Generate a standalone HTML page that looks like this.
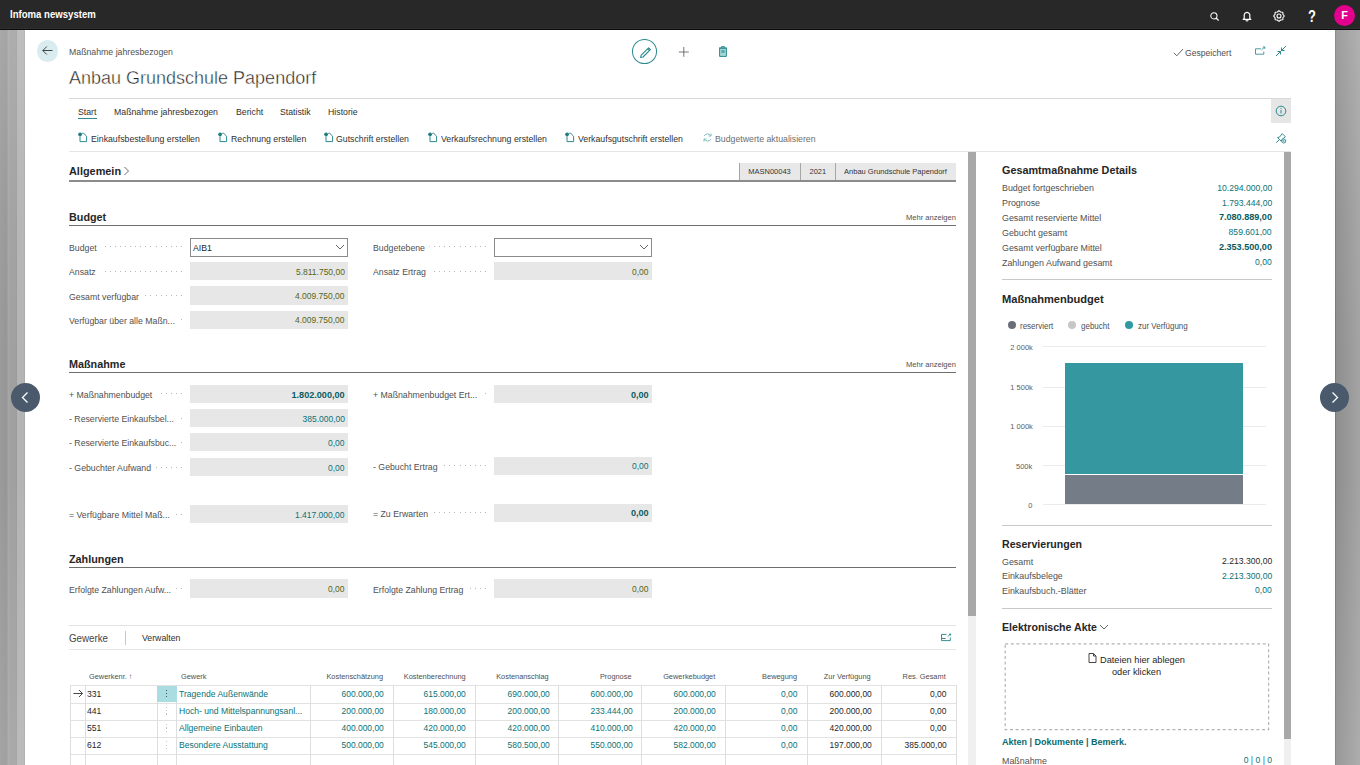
<!DOCTYPE html><html><head><meta charset="utf-8"><style>html,body{margin:0;padding:0;width:1360px;height:765px;overflow:hidden;background:#fff;font-family:"Liberation Sans",sans-serif}body>div,body>svg{position:absolute;box-sizing:border-box}</style></head><body>
<div style="left:0;top:30px;width:25px;height:735px;background:linear-gradient(180deg,rgba(255,255,255,0.14) 0,rgba(255,255,255,0.04) 25%,rgba(255,255,255,0) 45%,rgba(255,255,255,0) 60%,rgba(255,255,255,0.1) 100%),linear-gradient(90deg,#9a9a9a 0,#969696 7px,#a6a6a6 8px,#a6a6a6 9px,#a0a0a0 10px,#a0a0a0 16px,#999 17px,#b4b4b4 17.5px,#b4b4b4 24px,#a0a0a0 25px)"></div>
<div style="left:1335px;top:30px;width:25px;height:735px;background:linear-gradient(180deg,rgba(255,255,255,0.14) 0,rgba(255,255,255,0.04) 25%,rgba(255,255,255,0) 45%,rgba(255,255,255,0) 60%,rgba(255,255,255,0.1) 100%),linear-gradient(90deg,#7a7a7a 0,#7a7a7a 1px,#8e8e8e 1.5px,#a4a4a4 25px)"></div>
<div style="left:0px;top:0px;width:1360px;height:29px;background:#282828"></div>
<div style="left:0px;top:28px;width:1360px;height:1px;background:#303030"></div>
<div style="left:0px;top:29px;width:1360px;height:1px;background:#0a0a0a"></div>
<div style="left:10px;top:9.04px;font-size:10.94px;line-height:10.94px;color:#ffffff;font-weight:bold;white-space:nowrap;transform:scaleX(0.8772);transform-origin:left;">Infoma newsystem</div>
<svg style="left:1209px;top:11px;" width="12" height="11" viewBox="0 0 12 11"><circle cx="4.9" cy="4.8" r="3.1" fill="none" stroke="#fff" stroke-width="1.05"/><line x1="7.1" y1="7.0" x2="9.6" y2="9.5" stroke="#fff" stroke-width="1.1"/></svg>
<svg style="left:1241px;top:10px;" width="12" height="12" viewBox="0 0 12 12"><path d="M3.2 8.4 V4.6 A2.9 2.9 0 0 1 8.8 4.6 V8.4 L9.8 9.4 H2.2 Z" fill="none" stroke="#fff" stroke-width="1.2" stroke-linejoin="round"/><path d="M4.8 10.2 A1.3 1.3 0 0 0 7.2 10.2" fill="none" stroke="#fff" stroke-width="1.1"/></svg>
<svg style="left:1273px;top:10px;" width="12" height="12" viewBox="0 0 12 12"><polygon points="11.40,6.00 9.97,7.65 9.82,9.82 7.65,9.97 6.00,11.40 4.35,9.97 2.18,9.82 2.03,7.65 0.60,6.00 2.03,4.35 2.18,2.18 4.35,2.03 6.00,0.60 7.65,2.03 9.82,2.18 9.97,4.35" fill="none" stroke="#fff" stroke-width="1.1" stroke-linejoin="round"/><circle cx="6" cy="6" r="2" fill="none" stroke="#fff" stroke-width="1.1"/></svg>
<div style="left:1308px;top:8.33px;font-size:16.50px;line-height:16.50px;color:#fff;font-weight:bold;white-space:nowrap;transform:scaleX(0.78);transform-origin:left">?</div>
<div style="left:1334px;top:5px;width:21px;height:21px;background:#e3008c;border-radius:50%"></div>
<div style="left:1341.2px;top:10.16px;font-size:10.80px;line-height:10.80px;color:#fff;font-weight:bold;white-space:nowrap;">F</div>
<div style="left:25px;top:30px;width:1310px;height:735px;background:#fff"></div>
<div style="left:36.5px;top:40px;width:21.5px;height:21.5px;background:#d9ecef;border-radius:50%"></div>
<svg style="left:41px;top:44px;" width="13" height="13" viewBox="0 0 13 13"><path d="M11.5 6.5 H1.8 M5.8 2.5 L1.8 6.5 L5.8 10.5" fill="none" stroke="#333" stroke-width="0.9"/></svg>
<div style="left:69px;top:48.35px;font-size:9.28px;line-height:9.28px;color:#505050;font-weight:normal;white-space:nowrap;transform:scaleX(0.9434);transform-origin:left;">Maßnahme jahresbezogen</div>
<div style="left:69px;top:67.75px;font-size:19.08px;line-height:19.08px;color:#1e1e1e;font-weight:normal;white-space:nowrap;transform:scaleX(0.9434);transform-origin:left;-webkit-text-stroke:0.45px #fff">Anbau Grundschule Papendorf</div>
<div style="left:632px;top:39.4px;width:25px;height:24.6px;border:1.2px solid #2a8a8e;border-radius:50%"></div>
<svg style="left:638px;top:45px;" width="15" height="15" viewBox="0 0 15 15"><path d="M2.6 12.4 L3.2 10.2 L10.6 2.8 L12.4 4.6 L5 12 Z M9.6 3.8 L11.4 5.6" fill="none" stroke="#2a8a8e" stroke-width="1.1" stroke-linejoin="round"/></svg>
<svg style="left:678px;top:46px;" width="12" height="12" viewBox="0 0 12 12"><path d="M5.8 1 V10.8 M0.8 6 H10.8" stroke="#666" stroke-width="0.9"/></svg>
<svg style="left:717px;top:45px;" width="12" height="13" viewBox="0 0 12 13"><path d="M2.6 3.2 H9.4 V11.4 H2.6 Z" fill="#a6d6d6" stroke="#2a8a8e" stroke-width="1"/><path d="M2 3 H10 M4.6 3 V1.6 H7.4 V3" fill="none" stroke="#2a8a8e" stroke-width="1"/><rect x="4.4" y="5" width="3.2" height="3" fill="#2a8a8e" opacity="0.6"/></svg>
<svg style="left:1173px;top:48px;" width="11" height="9" viewBox="0 0 11 9"><path d="M0.8 4.8 L3.8 7.8 L10 1" fill="none" stroke="#555" stroke-width="0.9"/></svg>
<div style="left:1184.5px;top:48.58px;font-size:9.12px;line-height:9.12px;color:#505050;font-weight:normal;white-space:nowrap;transform:scaleX(0.9434);transform-origin:left;">Gespeichert</div>
<svg style="left:1254px;top:46px;" width="12" height="10" viewBox="0 0 12 10"><path d="M7 2.8 H1.5 V8.2 H9.8 V5.5" fill="none" stroke="#2a8a8e" stroke-width="0.85"/><path d="M7.5 4 L10.5 1.2 M8.8 1 H10.8 V3" fill="none" stroke="#2a8a8e" stroke-width="0.85"/></svg>
<svg style="left:1275px;top:45px;" width="12" height="12" viewBox="0 0 12 12"><path d="M11 1 L6.5 5.5 M6.5 2.5 V5.5 H9.5 M1 11 L5.5 6.5 M2.5 6.5 H5.5 V9.5" fill="none" stroke="#2a8a8e" stroke-width="1"/></svg>
<div style="left:69px;top:98px;width:1222px;height:1px;background:#d9d9d9"></div>
<div style="left:1271px;top:98.5px;width:20px;height:24.5px;background:#e6e6e6"></div>
<svg style="left:1275px;top:105px;" width="12" height="12" viewBox="0 0 12 12"><circle cx="6" cy="6" r="4.8" fill="none" stroke="#2a8a8e" stroke-width="1"/><path d="M6 5 V8.5" stroke="#2a8a8e" stroke-width="1"/><circle cx="6" cy="3.5" r="0.6" fill="#2a8a8e"/></svg>
<div style="left:78px;top:108.15px;font-size:9.28px;line-height:9.28px;color:#303030;font-weight:normal;white-space:nowrap;transform:scaleX(0.9434);transform-origin:left;">Start</div>
<div style="left:113.6px;top:108.15px;font-size:9.28px;line-height:9.28px;color:#303030;font-weight:normal;white-space:nowrap;transform:scaleX(0.9434);transform-origin:left;">Maßnahme jahresbezogen</div>
<div style="left:235.5px;top:108.15px;font-size:9.28px;line-height:9.28px;color:#303030;font-weight:normal;white-space:nowrap;transform:scaleX(0.9434);transform-origin:left;">Bericht</div>
<div style="left:280px;top:108.15px;font-size:9.28px;line-height:9.28px;color:#303030;font-weight:normal;white-space:nowrap;transform:scaleX(0.9434);transform-origin:left;">Statistik</div>
<div style="left:327.8px;top:108.15px;font-size:9.28px;line-height:9.28px;color:#303030;font-weight:normal;white-space:nowrap;transform:scaleX(0.9434);transform-origin:left;">Historie</div>
<div style="left:78px;top:117.5px;width:18.5px;height:1.3px;background:#2a8a8e"></div>
<svg style="left:78px;top:131px;" width="11" height="12" viewBox="0 0 11 12"><path d="M4.2 2.3 H5.7 L8.6 5.2 V10.6 H2 V5.2" fill="none" stroke="#2a8a8e" stroke-width="1"/><circle cx="2.1" cy="3.3" r="1.9" fill="#1f7a7e"/></svg>
<div style="left:90.5px;top:134.65px;font-size:9.28px;line-height:9.28px;color:#303030;font-weight:normal;white-space:nowrap;transform:scaleX(0.9434);transform-origin:left;">Einkaufsbestellung erstellen</div>
<svg style="left:218px;top:131px;" width="11" height="12" viewBox="0 0 11 12"><path d="M4.2 2.3 H5.7 L8.6 5.2 V10.6 H2 V5.2" fill="none" stroke="#2a8a8e" stroke-width="1"/><circle cx="2.1" cy="3.3" r="1.9" fill="#1f7a7e"/></svg>
<div style="left:230.5px;top:134.65px;font-size:9.28px;line-height:9.28px;color:#303030;font-weight:normal;white-space:nowrap;transform:scaleX(0.9434);transform-origin:left;">Rechnung erstellen</div>
<svg style="left:323.5px;top:131px;" width="11" height="12" viewBox="0 0 11 12"><path d="M4.2 2.3 H5.7 L8.6 5.2 V10.6 H2 V5.2" fill="none" stroke="#2a8a8e" stroke-width="1"/><circle cx="2.1" cy="3.3" r="1.9" fill="#1f7a7e"/></svg>
<div style="left:336.0px;top:134.65px;font-size:9.28px;line-height:9.28px;color:#303030;font-weight:normal;white-space:nowrap;transform:scaleX(0.9434);transform-origin:left;">Gutschrift erstellen</div>
<svg style="left:428px;top:131px;" width="11" height="12" viewBox="0 0 11 12"><path d="M4.2 2.3 H5.7 L8.6 5.2 V10.6 H2 V5.2" fill="none" stroke="#2a8a8e" stroke-width="1"/><circle cx="2.1" cy="3.3" r="1.9" fill="#1f7a7e"/></svg>
<div style="left:440.5px;top:134.65px;font-size:9.28px;line-height:9.28px;color:#303030;font-weight:normal;white-space:nowrap;transform:scaleX(0.9434);transform-origin:left;">Verkaufsrechnung erstellen</div>
<svg style="left:565px;top:131px;" width="11" height="12" viewBox="0 0 11 12"><path d="M4.2 2.3 H5.7 L8.6 5.2 V10.6 H2 V5.2" fill="none" stroke="#2a8a8e" stroke-width="1"/><circle cx="2.1" cy="3.3" r="1.9" fill="#1f7a7e"/></svg>
<div style="left:577.5px;top:134.65px;font-size:9.28px;line-height:9.28px;color:#303030;font-weight:normal;white-space:nowrap;transform:scaleX(0.9434);transform-origin:left;">Verkaufsgutschrift erstellen</div>
<svg style="left:702px;top:132px;" width="11" height="11" viewBox="0 0 11 11"><path d="M9 4 A4 4 0 0 0 2 4 M2 7 A4 4 0 0 0 9 7" fill="none" stroke="#7fbcbc" stroke-width="1"/><path d="M9 1.5 V4 H6.5 M2 9.5 V7 H4.5" fill="none" stroke="#7fbcbc" stroke-width="1"/></svg>
<div style="left:714.5px;top:134.65px;font-size:9.28px;line-height:9.28px;color:#6e6e6e;font-weight:normal;white-space:nowrap;transform:scaleX(0.9434);transform-origin:left;">Budgetwerte aktualisieren</div>
<svg style="left:1275px;top:132px;" width="12" height="12" viewBox="0 0 12 12"><path d="M1.2 10.8 L4.6 7.4 M2.6 5.6 L4.4 5.2 L7.2 1.6 L10.4 4.8 L6.8 7.6 L6.4 9.4 Z" fill="none" stroke="#2a8a8e" stroke-width="0.95" stroke-linejoin="round"/><circle cx="8.8" cy="9" r="2" fill="#fff" stroke="#2a8a8e" stroke-width="0.9"/><circle cx="8.8" cy="9" r="0.8" fill="#2a8a8e"/></svg>
<div style="left:69px;top:151px;width:1222px;height:1px;background:#e6e6e6"></div>
<div style="left:968px;top:152px;width:8px;height:464px;background:#a8a8a8"></div>
<div style="left:968px;top:616px;width:8px;height:149px;background:#f0f0f0"></div>
<div style="left:1283.5px;top:152px;width:7.5px;height:587px;background:#a8a8a8"></div>
<div style="left:1283.5px;top:739px;width:7.5px;height:26px;background:#f0f0f0"></div>
<div style="left:69px;top:166.47px;font-size:10.90px;line-height:10.90px;color:#262626;font-weight:bold;white-space:nowrap;">Allgemein</div>
<svg style="left:123px;top:166px;" width="7" height="10" viewBox="0 0 7 10"><path d="M1.5 1 L5.5 5 L1.5 9" fill="none" stroke="#555" stroke-width="0.9"/></svg>
<div style="left:69px;top:180px;width:887px;height:2px;background:#8c8c8c"></div>
<div style="left:739px;top:163px;width:61px;height:17px;background:#e8e8e9;border-left:1px solid #a6a6a6;font-size:7.5px;line-height:17px;text-align:center;color:#333;white-space:nowrap"><span style="display:inline-block;font-size:7.95px;transform:scaleX(0.943)">MASN00043</span></div>
<div style="left:800px;top:163px;width:34.5px;height:17px;background:#e8e8e9;border-left:1px solid #a6a6a6;font-size:7.5px;line-height:17px;text-align:center;color:#333;white-space:nowrap"><span style="display:inline-block;font-size:7.95px;transform:scaleX(0.943)">2021</span></div>
<div style="left:834.5px;top:163px;width:121.5px;height:17px;background:#e8e8e9;border-left:1px solid #a6a6a6;font-size:7.5px;line-height:17px;text-align:center;color:#333;white-space:nowrap"><span style="display:inline-block;font-size:7.95px;transform:scaleX(0.943)">Anbau Grundschule Papendorf</span></div>
<div style="left:69px;top:211.96px;font-size:10.80px;line-height:10.80px;color:#262626;font-weight:bold;white-space:nowrap;">Budget</div>
<div style="right:404px;top:214.33px;font-size:8.00px;line-height:8.00px;color:#505050;font-weight:normal;white-space:nowrap;transform:scaleX(0.9434);transform-origin:right;">Mehr anzeigen</div>
<div style="left:69px;top:224.6px;width:887px;height:1.3px;background:#6e6e6e"></div>
<div style="left:69px;top:246.00px;width:113px;height:1px;background:repeating-linear-gradient(270deg,#b8b8b8 0 1px,transparent 1px 5.1px)"></div>
<div style="left:69px;top:242.85px;font-size:9.62px;line-height:9.62px;color:#505050;white-space:nowrap;background:#fff;padding-right:5px;transform:scaleX(0.9091);transform-origin:left">Budget</div>
<div style="left:190px;top:238.2px;width:158px;height:18.5px;border:1px solid #8a8a8a;background:#fff"></div>
<div style="left:193px;top:243.65px;font-size:9.28px;line-height:9.28px;color:#262626;font-weight:normal;white-space:nowrap;transform:scaleX(0.9434);transform-origin:left;">AIB1</div>
<svg style="left:335px;top:244.2px;" width="10" height="7" viewBox="0 0 10 7"><path d="M1 1 L5 5 L9 1" fill="none" stroke="#555" stroke-width="0.9"/></svg>
<div style="left:373px;top:246.00px;width:113px;height:1px;background:repeating-linear-gradient(270deg,#b8b8b8 0 1px,transparent 1px 5.1px)"></div>
<div style="left:373px;top:242.85px;font-size:9.62px;line-height:9.62px;color:#505050;white-space:nowrap;background:#fff;padding-right:5px;transform:scaleX(0.9091);transform-origin:left">Budgetebene</div>
<div style="left:494px;top:238.2px;width:158px;height:18.5px;border:1px solid #8a8a8a;background:#fff"></div>
<svg style="left:639px;top:244.2px;" width="10" height="7" viewBox="0 0 10 7"><path d="M1 1 L5 5 L9 1" fill="none" stroke="#555" stroke-width="0.9"/></svg>
<div style="left:69px;top:270.60px;width:113px;height:1px;background:repeating-linear-gradient(270deg,#b8b8b8 0 1px,transparent 1px 5.1px)"></div>
<div style="left:69px;top:267.45px;font-size:9.62px;line-height:9.62px;color:#505050;white-space:nowrap;background:#fff;padding-right:5px;transform:scaleX(0.9091);transform-origin:left">Ansatz</div>
<div style="left:190px;top:262px;width:158px;height:18.3px;background:#e7e7e8"></div>
<div style="right:1015.4px;top:267.87px;font-size:9.01px;line-height:9.01px;color:#566514;font-weight:normal;white-space:nowrap;transform:scaleX(0.9434);transform-origin:right;">5.811.750,00</div>
<div style="left:373px;top:270.60px;width:113px;height:1px;background:repeating-linear-gradient(270deg,#b8b8b8 0 1px,transparent 1px 5.1px)"></div>
<div style="left:373px;top:267.45px;font-size:9.62px;line-height:9.62px;color:#505050;white-space:nowrap;background:#fff;padding-right:5px;transform:scaleX(0.9091);transform-origin:left">Ansatz Ertrag</div>
<div style="left:494px;top:262px;width:158px;height:18.3px;background:#e7e7e8"></div>
<div style="right:711.4px;top:267.87px;font-size:9.01px;line-height:9.01px;color:#566514;font-weight:normal;white-space:nowrap;transform:scaleX(0.9434);transform-origin:right;">0,00</div>
<div style="left:69px;top:294.90px;width:113px;height:1px;background:repeating-linear-gradient(270deg,#b8b8b8 0 1px,transparent 1px 5.1px)"></div>
<div style="left:69px;top:291.75px;font-size:9.62px;line-height:9.62px;color:#505050;white-space:nowrap;background:#fff;padding-right:5px;transform:scaleX(0.9091);transform-origin:left">Gesamt verfügbar</div>
<div style="left:190px;top:286.3px;width:158px;height:18.3px;background:#e7e7e8"></div>
<div style="right:1015.4px;top:292.17px;font-size:9.01px;line-height:9.01px;color:#566514;font-weight:normal;white-space:nowrap;transform:scaleX(0.9434);transform-origin:right;">4.009.750,00</div>
<div style="left:69px;top:319.10px;width:113px;height:1px;background:repeating-linear-gradient(270deg,#b8b8b8 0 1px,transparent 1px 5.1px)"></div>
<div style="left:69px;top:315.95px;font-size:9.62px;line-height:9.62px;color:#505050;white-space:nowrap;background:#fff;padding-right:5px;transform:scaleX(0.9091);transform-origin:left">Verfügbar über alle Maßn...</div>
<div style="left:190px;top:310.5px;width:158px;height:18.3px;background:#e7e7e8"></div>
<div style="right:1015.4px;top:316.37px;font-size:9.01px;line-height:9.01px;color:#566514;font-weight:normal;white-space:nowrap;transform:scaleX(0.9434);transform-origin:right;">4.009.750,00</div>
<div style="left:69px;top:358.56px;font-size:10.80px;line-height:10.80px;color:#262626;font-weight:bold;white-space:nowrap;">Maßnahme</div>
<div style="right:404px;top:360.93px;font-size:8.00px;line-height:8.00px;color:#505050;font-weight:normal;white-space:nowrap;transform:scaleX(0.9434);transform-origin:right;">Mehr anzeigen</div>
<div style="left:69px;top:372px;width:887px;height:1.3px;background:#6e6e6e"></div>
<div style="left:69px;top:393.30px;width:113px;height:1px;background:repeating-linear-gradient(270deg,#b8b8b8 0 1px,transparent 1px 5.1px)"></div>
<div style="left:69px;top:390.15px;font-size:9.62px;line-height:9.62px;color:#505050;white-space:nowrap;background:#fff;padding-right:5px;transform:scaleX(0.9091);transform-origin:left">+ Maßnahmenbudget</div>
<div style="left:190px;top:384.7px;width:158px;height:18.3px;background:#e7e7e8"></div>
<div style="right:1015.4px;top:390.50px;font-size:9.10px;line-height:9.10px;color:#095c60;font-weight:bold;white-space:nowrap;">1.802.000,00</div>
<div style="left:373px;top:393.30px;width:113px;height:1px;background:repeating-linear-gradient(270deg,#b8b8b8 0 1px,transparent 1px 5.1px)"></div>
<div style="left:373px;top:390.15px;font-size:9.62px;line-height:9.62px;color:#505050;white-space:nowrap;background:#fff;padding-right:5px;transform:scaleX(0.9091);transform-origin:left">+ Maßnahmenbudget Ert...</div>
<div style="left:494px;top:384.7px;width:158px;height:18.3px;background:#e7e7e8"></div>
<div style="right:711.4px;top:390.50px;font-size:9.10px;line-height:9.10px;color:#095c60;font-weight:bold;white-space:nowrap;">0,00</div>
<div style="left:69px;top:417.60px;width:113px;height:1px;background:repeating-linear-gradient(270deg,#b8b8b8 0 1px,transparent 1px 5.1px)"></div>
<div style="left:69px;top:414.45px;font-size:9.62px;line-height:9.62px;color:#505050;white-space:nowrap;background:#fff;padding-right:5px;transform:scaleX(0.9091);transform-origin:left">- Reservierte Einkaufsbel...</div>
<div style="left:190px;top:409px;width:158px;height:18.3px;background:#e7e7e8"></div>
<div style="right:1015.4px;top:414.87px;font-size:9.01px;line-height:9.01px;color:#0a7275;font-weight:normal;white-space:nowrap;transform:scaleX(0.9434);transform-origin:right;">385.000,00</div>
<div style="left:69px;top:441.60px;width:113px;height:1px;background:repeating-linear-gradient(270deg,#b8b8b8 0 1px,transparent 1px 5.1px)"></div>
<div style="left:69px;top:438.45px;font-size:9.62px;line-height:9.62px;color:#505050;white-space:nowrap;background:#fff;padding-right:5px;transform:scaleX(0.9091);transform-origin:left">- Reservierte Einkaufsbuc...</div>
<div style="left:190px;top:433px;width:158px;height:18.3px;background:#e7e7e8"></div>
<div style="right:1015.4px;top:438.87px;font-size:9.01px;line-height:9.01px;color:#0a7275;font-weight:normal;white-space:nowrap;transform:scaleX(0.9434);transform-origin:right;">0,00</div>
<div style="left:69px;top:466.50px;width:113px;height:1px;background:repeating-linear-gradient(270deg,#b8b8b8 0 1px,transparent 1px 5.1px)"></div>
<div style="left:69px;top:463.35px;font-size:9.62px;line-height:9.62px;color:#505050;white-space:nowrap;background:#fff;padding-right:5px;transform:scaleX(0.9091);transform-origin:left">- Gebuchter Aufwand</div>
<div style="left:190px;top:457.9px;width:158px;height:18.3px;background:#e7e7e8"></div>
<div style="right:1015.4px;top:463.77px;font-size:9.01px;line-height:9.01px;color:#0a7275;font-weight:normal;white-space:nowrap;transform:scaleX(0.9434);transform-origin:right;">0,00</div>
<div style="left:373px;top:465.10px;width:113px;height:1px;background:repeating-linear-gradient(270deg,#b8b8b8 0 1px,transparent 1px 5.1px)"></div>
<div style="left:373px;top:461.95px;font-size:9.62px;line-height:9.62px;color:#505050;white-space:nowrap;background:#fff;padding-right:5px;transform:scaleX(0.9091);transform-origin:left">- Gebucht Ertrag</div>
<div style="left:494px;top:456.5px;width:158px;height:18.3px;background:#e7e7e8"></div>
<div style="right:711.4px;top:462.37px;font-size:9.01px;line-height:9.01px;color:#0a7275;font-weight:normal;white-space:nowrap;transform:scaleX(0.9434);transform-origin:right;">0,00</div>
<div style="left:69px;top:513.60px;width:113px;height:1px;background:repeating-linear-gradient(270deg,#b8b8b8 0 1px,transparent 1px 5.1px)"></div>
<div style="left:69px;top:510.45px;font-size:9.62px;line-height:9.62px;color:#505050;white-space:nowrap;background:#fff;padding-right:5px;transform:scaleX(0.9091);transform-origin:left">= Verfügbare Mittel Maß...</div>
<div style="left:190px;top:505px;width:158px;height:18.3px;background:#e7e7e8"></div>
<div style="right:1015.4px;top:510.87px;font-size:9.01px;line-height:9.01px;color:#0a7275;font-weight:normal;white-space:nowrap;transform:scaleX(0.9434);transform-origin:right;">1.417.000,00</div>
<div style="left:373px;top:512.10px;width:113px;height:1px;background:repeating-linear-gradient(270deg,#b8b8b8 0 1px,transparent 1px 5.1px)"></div>
<div style="left:373px;top:508.95px;font-size:9.62px;line-height:9.62px;color:#505050;white-space:nowrap;background:#fff;padding-right:5px;transform:scaleX(0.9091);transform-origin:left">= Zu Erwarten</div>
<div style="left:494px;top:503.5px;width:158px;height:18.3px;background:#e7e7e8"></div>
<div style="right:711.4px;top:509.30px;font-size:9.10px;line-height:9.10px;color:#095c60;font-weight:bold;white-space:nowrap;">0,00</div>
<div style="left:69px;top:553.56px;font-size:10.80px;line-height:10.80px;color:#262626;font-weight:bold;white-space:nowrap;">Zahlungen</div>
<div style="left:69px;top:567px;width:887px;height:1.3px;background:#6e6e6e"></div>
<div style="left:69px;top:587.90px;width:113px;height:1px;background:repeating-linear-gradient(270deg,#b8b8b8 0 1px,transparent 1px 5.1px)"></div>
<div style="left:69px;top:584.75px;font-size:9.62px;line-height:9.62px;color:#505050;white-space:nowrap;background:#fff;padding-right:5px;transform:scaleX(0.9091);transform-origin:left">Erfolgte Zahlungen Aufw...</div>
<div style="left:190px;top:579.3px;width:158px;height:18.3px;background:#e7e7e8"></div>
<div style="right:1015.4px;top:585.17px;font-size:9.01px;line-height:9.01px;color:#566514;font-weight:normal;white-space:nowrap;transform:scaleX(0.9434);transform-origin:right;">0,00</div>
<div style="left:373px;top:587.90px;width:113px;height:1px;background:repeating-linear-gradient(270deg,#b8b8b8 0 1px,transparent 1px 5.1px)"></div>
<div style="left:373px;top:584.75px;font-size:9.62px;line-height:9.62px;color:#505050;white-space:nowrap;background:#fff;padding-right:5px;transform:scaleX(0.9091);transform-origin:left">Erfolgte Zahlung Ertrag</div>
<div style="left:494px;top:579.3px;width:158px;height:18.3px;background:#e7e7e8"></div>
<div style="right:711.4px;top:585.17px;font-size:9.01px;line-height:9.01px;color:#566514;font-weight:normal;white-space:nowrap;transform:scaleX(0.9434);transform-origin:right;">0,00</div>
<div style="left:69px;top:625px;width:887px;height:1px;background:#e2e2e2"></div>
<div style="left:69px;top:633.55px;font-size:10.34px;line-height:10.34px;color:#444;font-weight:normal;white-space:nowrap;transform:scaleX(0.9434);transform-origin:left;">Gewerke</div>
<div style="left:125px;top:631px;width:1px;height:13.5px;background:#c8c8c8"></div>
<div style="left:142px;top:634.45px;font-size:9.28px;line-height:9.28px;color:#303030;font-weight:normal;white-space:nowrap;transform:scaleX(0.9434);transform-origin:left;">Verwalten</div>
<svg style="left:940px;top:632px;" width="12" height="10" viewBox="0 0 12 10"><path d="M6.5 2.4 H1.5 V8.6 H10.3 V5.6" fill="none" stroke="#2a8a8e" stroke-width="0.95"/><path d="M1.5 6.5 H5.6" stroke="#2a8a8e" stroke-width="1"/><path d="M7.6 4.6 L9.4 3" stroke="#2a8a8e" stroke-width="0.9"/><circle cx="10.1" cy="2.5" r="1.1" fill="#2a8a8e"/></svg>
<div style="left:69px;top:649px;width:887px;height:1px;background:#e6e6e6"></div>
<div style="left:89px;top:672.66px;font-size:7.84px;line-height:7.84px;color:#505050;font-weight:normal;white-space:nowrap;transform:scaleX(0.9434);transform-origin:left;">Gewerkenr. ↑</div>
<div style="left:180.5px;top:672.66px;font-size:7.84px;line-height:7.84px;color:#505050;font-weight:normal;white-space:nowrap;transform:scaleX(0.9434);transform-origin:left;">Gewerk</div>
<div style="right:976.8px;top:672.66px;font-size:7.84px;line-height:7.84px;color:#505050;font-weight:normal;white-space:nowrap;transform:scaleX(0.9434);transform-origin:right;">Kostenschätzung</div>
<div style="right:894.3px;top:672.66px;font-size:7.84px;line-height:7.84px;color:#505050;font-weight:normal;white-space:nowrap;transform:scaleX(0.9434);transform-origin:right;">Kostenberechnung</div>
<div style="right:811.1px;top:672.66px;font-size:7.84px;line-height:7.84px;color:#505050;font-weight:normal;white-space:nowrap;transform:scaleX(0.9434);transform-origin:right;">Kostenanschlag</div>
<div style="right:728.1px;top:672.66px;font-size:7.84px;line-height:7.84px;color:#505050;font-weight:normal;white-space:nowrap;transform:scaleX(0.9434);transform-origin:right;">Prognose</div>
<div style="right:644.9px;top:672.66px;font-size:7.84px;line-height:7.84px;color:#505050;font-weight:normal;white-space:nowrap;transform:scaleX(0.9434);transform-origin:right;">Gewerkebudget</div>
<div style="right:563.0px;top:672.66px;font-size:7.84px;line-height:7.84px;color:#505050;font-weight:normal;white-space:nowrap;transform:scaleX(0.9434);transform-origin:right;">Bewegung</div>
<div style="right:489.0px;top:672.66px;font-size:7.84px;line-height:7.84px;color:#505050;font-weight:normal;white-space:nowrap;transform:scaleX(0.9434);transform-origin:right;">Zur Verfügung</div>
<div style="right:414.0px;top:672.66px;font-size:7.84px;line-height:7.84px;color:#505050;font-weight:normal;white-space:nowrap;transform:scaleX(0.9434);transform-origin:right;">Res. Gesamt</div>
<div style="left:69.6px;top:685.3px;width:886px;height:1px;background:#e2e2e2"></div>
<div style="left:69.6px;top:702.5px;width:886px;height:1px;background:#e2e2e2"></div>
<div style="left:69.6px;top:719.7px;width:886px;height:1px;background:#e2e2e2"></div>
<div style="left:69.6px;top:736.9px;width:886px;height:1px;background:#e2e2e2"></div>
<div style="left:69.6px;top:754.1px;width:886px;height:1px;background:#e2e2e2"></div>
<div style="left:69.6px;top:771.3px;width:886px;height:1px;background:#e2e2e2"></div>
<div style="left:69.6px;top:685.3px;width:1px;height:80px;background:#dedede"></div>
<div style="left:85.4px;top:685.3px;width:1px;height:80px;background:#dedede"></div>
<div style="left:156.6px;top:685.3px;width:1px;height:80px;background:#dedede"></div>
<div style="left:176.3px;top:685.3px;width:1px;height:80px;background:#dedede"></div>
<div style="left:309.5px;top:685.3px;width:1px;height:80px;background:#dedede"></div>
<div style="left:392.7px;top:685.3px;width:1px;height:80px;background:#dedede"></div>
<div style="left:475.2px;top:685.3px;width:1px;height:80px;background:#dedede"></div>
<div style="left:558.4px;top:685.3px;width:1px;height:80px;background:#dedede"></div>
<div style="left:641.4px;top:685.3px;width:1px;height:80px;background:#dedede"></div>
<div style="left:724.6px;top:685.3px;width:1px;height:80px;background:#dedede"></div>
<div style="left:806.5px;top:685.3px;width:1px;height:80px;background:#dedede"></div>
<div style="left:880.5px;top:685.3px;width:1px;height:80px;background:#dedede"></div>
<div style="left:955.5px;top:685.3px;width:1px;height:80px;background:#dedede"></div>
<div style="left:156.6px;top:685.8px;width:20.2px;height:16.7px;background:#a9dde2"></div>
<svg style="left:73px;top:689.3px;" width="11" height="9" viewBox="0 0 11 9"><path d="M0.5 4.5 H9.5 M6 1 L9.5 4.5 L6 8" fill="none" stroke="#333" stroke-width="0.9"/></svg>
<div style="left:87.3px;top:689.58px;font-size:9.12px;line-height:9.12px;color:#262626;font-weight:normal;white-space:nowrap;transform:scaleX(0.9434);transform-origin:left;">331</div>
<div style="left:165.7px;top:689.5999999999999px;width:1.3px;height:1.3px;background:#262626;border-radius:50%"></div>
<div style="left:165.7px;top:692.8999999999999px;width:1.3px;height:1.3px;background:#262626;border-radius:50%"></div>
<div style="left:165.7px;top:696.1999999999999px;width:1.3px;height:1.3px;background:#262626;border-radius:50%"></div>
<div style="left:178.5px;top:689.58px;font-size:9.12px;line-height:9.12px;color:#0a7275;font-weight:normal;white-space:nowrap;transform:scaleX(0.9434);transform-origin:left;">Tragende Außenwände</div>
<div style="right:976.3px;top:689.72px;font-size:8.96px;line-height:8.96px;color:#0a7275;font-weight:normal;white-space:nowrap;transform:scaleX(0.9434);transform-origin:right;">600.000,00</div>
<div style="right:893.8px;top:689.72px;font-size:8.96px;line-height:8.96px;color:#0a7275;font-weight:normal;white-space:nowrap;transform:scaleX(0.9434);transform-origin:right;">615.000,00</div>
<div style="right:810.6px;top:689.72px;font-size:8.96px;line-height:8.96px;color:#0a7275;font-weight:normal;white-space:nowrap;transform:scaleX(0.9434);transform-origin:right;">690.000,00</div>
<div style="right:727.6px;top:689.72px;font-size:8.96px;line-height:8.96px;color:#0a7275;font-weight:normal;white-space:nowrap;transform:scaleX(0.9434);transform-origin:right;">600.000,00</div>
<div style="right:644.4px;top:689.72px;font-size:8.96px;line-height:8.96px;color:#0a7275;font-weight:normal;white-space:nowrap;transform:scaleX(0.9434);transform-origin:right;">600.000,00</div>
<div style="right:562.5px;top:689.72px;font-size:8.96px;line-height:8.96px;color:#0a7275;font-weight:normal;white-space:nowrap;transform:scaleX(0.9434);transform-origin:right;">0,00</div>
<div style="right:488.5px;top:689.72px;font-size:8.96px;line-height:8.96px;color:#262626;font-weight:normal;white-space:nowrap;transform:scaleX(0.9434);transform-origin:right;">600.000,00</div>
<div style="right:413.5px;top:689.72px;font-size:8.96px;line-height:8.96px;color:#262626;font-weight:normal;white-space:nowrap;transform:scaleX(0.9434);transform-origin:right;">0,00</div>
<div style="left:87.3px;top:706.78px;font-size:9.12px;line-height:9.12px;color:#262626;font-weight:normal;white-space:nowrap;transform:scaleX(0.9434);transform-origin:left;">441</div>
<div style="left:165.7px;top:706.8px;width:1.3px;height:1.3px;background:#b8b8b8;border-radius:50%"></div>
<div style="left:165.7px;top:710.0999999999999px;width:1.3px;height:1.3px;background:#b8b8b8;border-radius:50%"></div>
<div style="left:165.7px;top:713.4px;width:1.3px;height:1.3px;background:#b8b8b8;border-radius:50%"></div>
<div style="left:178.5px;top:706.78px;font-size:9.12px;line-height:9.12px;color:#0a7275;font-weight:normal;white-space:nowrap;transform:scaleX(0.9434);transform-origin:left;">Hoch- und Mittelspannungsanl...</div>
<div style="right:976.3px;top:706.92px;font-size:8.96px;line-height:8.96px;color:#0a7275;font-weight:normal;white-space:nowrap;transform:scaleX(0.9434);transform-origin:right;">200.000,00</div>
<div style="right:893.8px;top:706.92px;font-size:8.96px;line-height:8.96px;color:#0a7275;font-weight:normal;white-space:nowrap;transform:scaleX(0.9434);transform-origin:right;">180.000,00</div>
<div style="right:810.6px;top:706.92px;font-size:8.96px;line-height:8.96px;color:#0a7275;font-weight:normal;white-space:nowrap;transform:scaleX(0.9434);transform-origin:right;">200.000,00</div>
<div style="right:727.6px;top:706.92px;font-size:8.96px;line-height:8.96px;color:#0a7275;font-weight:normal;white-space:nowrap;transform:scaleX(0.9434);transform-origin:right;">233.444,00</div>
<div style="right:644.4px;top:706.92px;font-size:8.96px;line-height:8.96px;color:#0a7275;font-weight:normal;white-space:nowrap;transform:scaleX(0.9434);transform-origin:right;">200.000,00</div>
<div style="right:562.5px;top:706.92px;font-size:8.96px;line-height:8.96px;color:#0a7275;font-weight:normal;white-space:nowrap;transform:scaleX(0.9434);transform-origin:right;">0,00</div>
<div style="right:488.5px;top:706.92px;font-size:8.96px;line-height:8.96px;color:#262626;font-weight:normal;white-space:nowrap;transform:scaleX(0.9434);transform-origin:right;">200.000,00</div>
<div style="right:413.5px;top:706.92px;font-size:8.96px;line-height:8.96px;color:#262626;font-weight:normal;white-space:nowrap;transform:scaleX(0.9434);transform-origin:right;">0,00</div>
<div style="left:87.3px;top:723.98px;font-size:9.12px;line-height:9.12px;color:#262626;font-weight:normal;white-space:nowrap;transform:scaleX(0.9434);transform-origin:left;">551</div>
<div style="left:165.7px;top:724.0px;width:1.3px;height:1.3px;background:#b8b8b8;border-radius:50%"></div>
<div style="left:165.7px;top:727.3px;width:1.3px;height:1.3px;background:#b8b8b8;border-radius:50%"></div>
<div style="left:165.7px;top:730.6px;width:1.3px;height:1.3px;background:#b8b8b8;border-radius:50%"></div>
<div style="left:178.5px;top:723.98px;font-size:9.12px;line-height:9.12px;color:#0a7275;font-weight:normal;white-space:nowrap;transform:scaleX(0.9434);transform-origin:left;">Allgemeine Einbauten</div>
<div style="right:976.3px;top:724.12px;font-size:8.96px;line-height:8.96px;color:#0a7275;font-weight:normal;white-space:nowrap;transform:scaleX(0.9434);transform-origin:right;">400.000,00</div>
<div style="right:893.8px;top:724.12px;font-size:8.96px;line-height:8.96px;color:#0a7275;font-weight:normal;white-space:nowrap;transform:scaleX(0.9434);transform-origin:right;">420.000,00</div>
<div style="right:810.6px;top:724.12px;font-size:8.96px;line-height:8.96px;color:#0a7275;font-weight:normal;white-space:nowrap;transform:scaleX(0.9434);transform-origin:right;">420.000,00</div>
<div style="right:727.6px;top:724.12px;font-size:8.96px;line-height:8.96px;color:#0a7275;font-weight:normal;white-space:nowrap;transform:scaleX(0.9434);transform-origin:right;">410.000,00</div>
<div style="right:644.4px;top:724.12px;font-size:8.96px;line-height:8.96px;color:#0a7275;font-weight:normal;white-space:nowrap;transform:scaleX(0.9434);transform-origin:right;">420.000,00</div>
<div style="right:562.5px;top:724.12px;font-size:8.96px;line-height:8.96px;color:#0a7275;font-weight:normal;white-space:nowrap;transform:scaleX(0.9434);transform-origin:right;">0,00</div>
<div style="right:488.5px;top:724.12px;font-size:8.96px;line-height:8.96px;color:#262626;font-weight:normal;white-space:nowrap;transform:scaleX(0.9434);transform-origin:right;">420.000,00</div>
<div style="right:413.5px;top:724.12px;font-size:8.96px;line-height:8.96px;color:#262626;font-weight:normal;white-space:nowrap;transform:scaleX(0.9434);transform-origin:right;">0,00</div>
<div style="left:87.3px;top:741.18px;font-size:9.12px;line-height:9.12px;color:#262626;font-weight:normal;white-space:nowrap;transform:scaleX(0.9434);transform-origin:left;">612</div>
<div style="left:165.7px;top:741.1999999999999px;width:1.3px;height:1.3px;background:#b8b8b8;border-radius:50%"></div>
<div style="left:165.7px;top:744.4999999999999px;width:1.3px;height:1.3px;background:#b8b8b8;border-radius:50%"></div>
<div style="left:165.7px;top:747.8px;width:1.3px;height:1.3px;background:#b8b8b8;border-radius:50%"></div>
<div style="left:178.5px;top:741.18px;font-size:9.12px;line-height:9.12px;color:#0a7275;font-weight:normal;white-space:nowrap;transform:scaleX(0.9434);transform-origin:left;">Besondere Ausstattung</div>
<div style="right:976.3px;top:741.32px;font-size:8.96px;line-height:8.96px;color:#0a7275;font-weight:normal;white-space:nowrap;transform:scaleX(0.9434);transform-origin:right;">500.000,00</div>
<div style="right:893.8px;top:741.32px;font-size:8.96px;line-height:8.96px;color:#0a7275;font-weight:normal;white-space:nowrap;transform:scaleX(0.9434);transform-origin:right;">545.000,00</div>
<div style="right:810.6px;top:741.32px;font-size:8.96px;line-height:8.96px;color:#0a7275;font-weight:normal;white-space:nowrap;transform:scaleX(0.9434);transform-origin:right;">580.500,00</div>
<div style="right:727.6px;top:741.32px;font-size:8.96px;line-height:8.96px;color:#0a7275;font-weight:normal;white-space:nowrap;transform:scaleX(0.9434);transform-origin:right;">550.000,00</div>
<div style="right:644.4px;top:741.32px;font-size:8.96px;line-height:8.96px;color:#0a7275;font-weight:normal;white-space:nowrap;transform:scaleX(0.9434);transform-origin:right;">582.000,00</div>
<div style="right:562.5px;top:741.32px;font-size:8.96px;line-height:8.96px;color:#0a7275;font-weight:normal;white-space:nowrap;transform:scaleX(0.9434);transform-origin:right;">0,00</div>
<div style="right:488.5px;top:741.32px;font-size:8.96px;line-height:8.96px;color:#262626;font-weight:normal;white-space:nowrap;transform:scaleX(0.9434);transform-origin:right;">197.000,00</div>
<div style="right:413.5px;top:741.32px;font-size:8.96px;line-height:8.96px;color:#262626;font-weight:normal;white-space:nowrap;transform:scaleX(0.9434);transform-origin:right;">385.000,00</div>
<div style="left:1002px;top:165.36px;font-size:10.80px;line-height:10.80px;color:#262626;font-weight:bold;white-space:nowrap;">Gesamtmaßnahme Details</div>
<div style="left:1002px;top:183.41px;font-size:9.43px;line-height:9.43px;color:#505050;font-weight:normal;white-space:nowrap;transform:scaleX(0.9434);transform-origin:left;">Budget fortgeschrieben</div>
<div style="right:88px;top:183.68px;font-size:9.12px;line-height:9.12px;color:#0a7275;font-weight:normal;white-space:nowrap;transform:scaleX(0.9434);transform-origin:right;">10.294.000,00</div>
<div style="left:1002px;top:198.26px;font-size:9.43px;line-height:9.43px;color:#505050;font-weight:normal;white-space:nowrap;transform:scaleX(0.9434);transform-origin:left;">Prognose</div>
<div style="right:88px;top:198.53px;font-size:9.12px;line-height:9.12px;color:#0a7275;font-weight:normal;white-space:nowrap;transform:scaleX(0.9434);transform-origin:right;">1.793.444,00</div>
<div style="left:1002px;top:213.11px;font-size:9.43px;line-height:9.43px;color:#505050;font-weight:normal;white-space:nowrap;transform:scaleX(0.9434);transform-origin:left;">Gesamt reservierte Mittel</div>
<div style="right:88px;top:213.40px;font-size:9.10px;line-height:9.10px;color:#095c60;font-weight:bold;white-space:nowrap;">7.080.889,00</div>
<div style="left:1002px;top:227.96px;font-size:9.43px;line-height:9.43px;color:#505050;font-weight:normal;white-space:nowrap;transform:scaleX(0.9434);transform-origin:left;">Gebucht gesamt</div>
<div style="right:88px;top:228.23px;font-size:9.12px;line-height:9.12px;color:#0a7275;font-weight:normal;white-space:nowrap;transform:scaleX(0.9434);transform-origin:right;">859.601,00</div>
<div style="left:1002px;top:242.81px;font-size:9.43px;line-height:9.43px;color:#505050;font-weight:normal;white-space:nowrap;transform:scaleX(0.9434);transform-origin:left;">Gesamt verfügbare Mittel</div>
<div style="right:88px;top:243.10px;font-size:9.10px;line-height:9.10px;color:#095c60;font-weight:bold;white-space:nowrap;">2.353.500,00</div>
<div style="left:1002px;top:257.66px;font-size:9.43px;line-height:9.43px;color:#505050;font-weight:normal;white-space:nowrap;transform:scaleX(0.9434);transform-origin:left;">Zahlungen Aufwand gesamt</div>
<div style="right:88px;top:257.93px;font-size:9.12px;line-height:9.12px;color:#0a7275;font-weight:normal;white-space:nowrap;transform:scaleX(0.9434);transform-origin:right;">0,00</div>
<div style="left:1002px;top:279px;width:270px;height:1px;background:#c8c8c8"></div>
<div style="left:1002px;top:293.50px;font-size:11.10px;line-height:11.10px;color:#262626;font-weight:bold;white-space:nowrap;">Maßnahmenbudget</div>
<div style="left:1007.6px;top:320.7px;width:8px;height:8px;background:#6b6e76;border-radius:50%"></div>
<div style="left:1020.4px;top:321.52px;font-size:8.48px;line-height:8.48px;color:#505050;font-weight:normal;white-space:nowrap;transform:scaleX(0.9434);transform-origin:left;">reserviert</div>
<div style="left:1068.3px;top:320.7px;width:8px;height:8px;background:#c6c6c6;border-radius:50%"></div>
<div style="left:1081.1px;top:321.52px;font-size:8.48px;line-height:8.48px;color:#505050;font-weight:normal;white-space:nowrap;transform:scaleX(0.9434);transform-origin:left;">gebucht</div>
<div style="left:1125.4px;top:320.7px;width:8px;height:8px;background:#2f9aa2;border-radius:50%"></div>
<div style="left:1138.2px;top:321.52px;font-size:8.48px;line-height:8.48px;color:#505050;font-weight:normal;white-space:nowrap;transform:scaleX(0.9434);transform-origin:left;">zur Verfügung</div>
<div style="left:1043px;top:346.3px;width:223px;height:1px;background:#ebebeb"></div>
<div style="right:327.4000000000001px;top:343.77px;font-size:7.95px;line-height:7.95px;color:#606060;font-weight:normal;white-space:nowrap;transform:scaleX(0.9434);transform-origin:right;">2 000k</div>
<div style="left:1043px;top:386.8px;width:223px;height:1px;background:#ebebeb"></div>
<div style="right:327.4000000000001px;top:384.27px;font-size:7.95px;line-height:7.95px;color:#606060;font-weight:normal;white-space:nowrap;transform:scaleX(0.9434);transform-origin:right;">1 500k</div>
<div style="left:1043px;top:425.9px;width:223px;height:1px;background:#ebebeb"></div>
<div style="right:327.4000000000001px;top:423.37px;font-size:7.95px;line-height:7.95px;color:#606060;font-weight:normal;white-space:nowrap;transform:scaleX(0.9434);transform-origin:right;">1 000k</div>
<div style="left:1043px;top:465.2px;width:223px;height:1px;background:#ebebeb"></div>
<div style="right:327.4000000000001px;top:462.67px;font-size:7.95px;line-height:7.95px;color:#606060;font-weight:normal;white-space:nowrap;transform:scaleX(0.9434);transform-origin:right;">500k</div>
<div style="left:1043px;top:504.2px;width:223px;height:1px;background:#ebebeb"></div>
<div style="right:327.4000000000001px;top:501.67px;font-size:7.95px;line-height:7.95px;color:#606060;font-weight:normal;white-space:nowrap;transform:scaleX(0.9434);transform-origin:right;">0</div>
<div style="left:1065px;top:362.9px;width:178px;height:110.8px;background:#3597a0"></div>
<div style="left:1065px;top:474.8px;width:178px;height:29.2px;background:#747c88"></div>
<div style="left:1002px;top:525px;width:270px;height:1px;background:#c8c8c8"></div>
<div style="left:1002px;top:538.93px;font-size:10.60px;line-height:10.60px;color:#262626;font-weight:bold;white-space:nowrap;">Reservierungen</div>
<div style="left:1002px;top:556.51px;font-size:9.43px;line-height:9.43px;color:#505050;font-weight:normal;white-space:nowrap;transform:scaleX(0.9434);transform-origin:left;">Gesamt</div>
<div style="right:88px;top:556.78px;font-size:9.12px;line-height:9.12px;color:#262626;font-weight:normal;white-space:nowrap;transform:scaleX(0.9434);transform-origin:right;">2.213.300,00</div>
<div style="left:1002px;top:571.26px;font-size:9.43px;line-height:9.43px;color:#505050;font-weight:normal;white-space:nowrap;transform:scaleX(0.9434);transform-origin:left;">Einkaufsbelege</div>
<div style="right:88px;top:571.53px;font-size:9.12px;line-height:9.12px;color:#0a7275;font-weight:normal;white-space:nowrap;transform:scaleX(0.9434);transform-origin:right;">2.213.300,00</div>
<div style="left:1002px;top:586.01px;font-size:9.43px;line-height:9.43px;color:#505050;font-weight:normal;white-space:nowrap;transform:scaleX(0.9434);transform-origin:left;">Einkaufsbuch.-Blätter</div>
<div style="right:88px;top:586.28px;font-size:9.12px;line-height:9.12px;color:#0a7275;font-weight:normal;white-space:nowrap;transform:scaleX(0.9434);transform-origin:right;">0,00</div>
<div style="left:1002px;top:608px;width:270px;height:1px;background:#c8c8c8"></div>
<div style="left:1002px;top:622.13px;font-size:10.60px;line-height:10.60px;color:#262626;font-weight:bold;white-space:nowrap;">Elektronische Akte</div>
<svg style="left:1099px;top:624px;" width="10" height="7" viewBox="0 0 10 7"><path d="M1 1 L5 5 L9 1" fill="none" stroke="#555" stroke-width="0.9"/></svg>
<svg style="left:1004px;top:643px;" width="266" height="88" viewBox="0 0 266 88"><rect x="1.2" y="0.8" width="263.4" height="85.8" fill="none" stroke="#b4b4b4" stroke-width="1.2" stroke-dasharray="3 2.6"/></svg>
<svg style="left:1088px;top:653px;" width="9" height="10" viewBox="0 0 9 10"><path d="M1 0.5 H5.5 L8 3 V9.5 H1 Z M5.5 0.5 V3 H8" fill="none" stroke="#333" stroke-width="0.9"/></svg>
<div style="left:1100.3px;top:655.14px;font-size:9.75px;line-height:9.75px;color:#262626;font-weight:normal;white-space:nowrap;transform:scaleX(0.9434);transform-origin:left;">Dateien hier ablegen</div>
<div style="left:1112px;top:667.34px;font-size:9.75px;line-height:9.75px;color:#262626;font-weight:normal;white-space:nowrap;transform:scaleX(0.9434);transform-origin:left;">oder klicken</div>
<div style="left:1002px;top:737.88px;font-size:9.00px;line-height:9.00px;color:#0b6a6e;font-weight:bold;white-space:nowrap;">Akten | Dokumente | Bemerk.</div>
<div style="left:1002px;top:756.21px;font-size:9.43px;line-height:9.43px;color:#505050;font-weight:normal;white-space:nowrap;transform:scaleX(0.9434);transform-origin:left;">Maßnahme</div>
<div style="right:88px;top:756.48px;font-size:9.12px;line-height:9.12px;color:#0a7275;font-weight:normal;white-space:nowrap;transform:scaleX(0.9434);transform-origin:right;">0 | 0 | 0</div>
<div style="left:10.8px;top:383px;width:29.2px;height:29.2px;background:#4b596c;border-radius:50%"></div>
<svg style="left:19px;top:391px;" width="12" height="13" viewBox="0 0 12 13"><path d="M8.5 1.5 L3.5 6.5 L8.5 11.5" fill="none" stroke="#fff" stroke-width="1.3"/></svg>
<div style="left:1320.1px;top:383px;width:29.2px;height:29.2px;background:#4b596c;border-radius:50%"></div>
<svg style="left:1329px;top:391px;" width="12" height="13" viewBox="0 0 12 13"><path d="M3.5 1.5 L8.5 6.5 L3.5 11.5" fill="none" stroke="#fff" stroke-width="1.3"/></svg>
</body></html>
